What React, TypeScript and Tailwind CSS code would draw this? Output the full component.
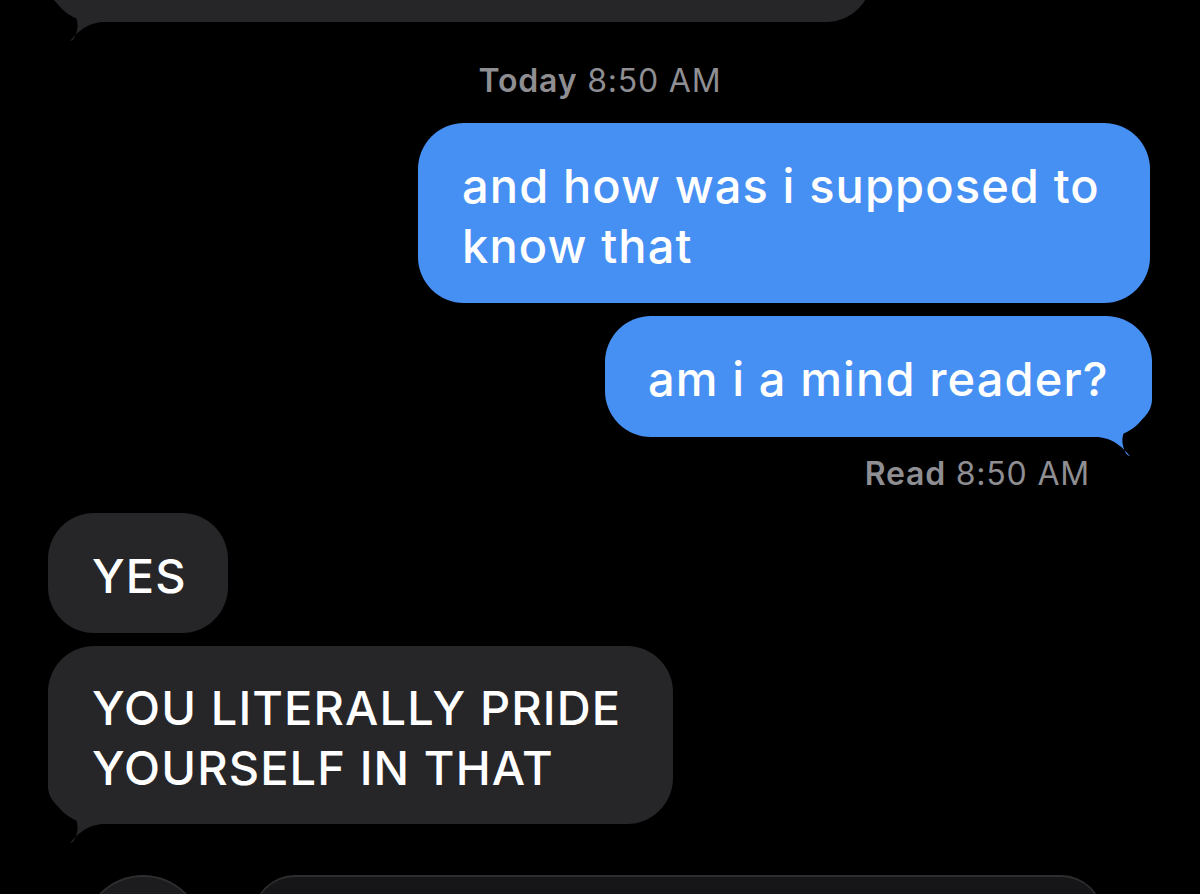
import React from "react";

const FONT = { fontFamily: "Inter, 'Noto Sans', 'Liberation Sans', sans-serif" };

// iMessage-style tail, drawn for the bottom-right corner; mirrored for incoming bubbles
function Tail({ color, side }: { color: string; side: "left" | "right" }) {
  return (
    <svg
      width="62"
      height="70"
      viewBox="-60 -50 62 70"
      className={
        side === "right"
          ? "absolute right-[-2px] bottom-[-20px]"
          : "absolute left-[-2px] bottom-[-20px] -scale-x-100"
      }
    >
      <path
        fill={color}
        d="M0 -50 L0 -38 C0 -23 -13 -14 -23 -10 C-30 -6 -31 4 -28 12 C-27 15 -25 19 -22 19 C-27 14 -35 2 -54 0 L-60 0 L-60 -50 Z"
      />
    </svg>
  );
}

export default function App() {
  return (
    <div className="w-[1200px] h-[894px] bg-black overflow-hidden flex flex-col text-white" style={FONT}>
      {/* previous message, cut off at the top */}
      <div className="relative ml-[48px] -mt-[78px] w-[824px] h-[100px] shrink-0 rounded-[46px] bg-[#262629]">
        <Tail color="#262629" side="left" />
      </div>

      <div className="mt-[39px] h-[40px] text-center text-[32px] leading-[40px] tracking-[0.8px] text-[#8e8e93]">
        <span className="font-semibold">Today</span> 8:50 AM
      </div>

      {/* outgoing */}
      <div className="mt-[22px] self-end mr-[50px] w-[732px] rounded-[46px] bg-[#4790f3] px-[44px] pt-[33px] pb-[27px] text-[47px] font-medium leading-[60px] tracking-[1.1px]">
        <span className="block whitespace-nowrap">and how was i supposed to</span>
        <span className="block whitespace-nowrap">know that</span>
      </div>
      <div className="relative mt-[13px] self-end mr-[48px] w-[547px] rounded-[46px] bg-[#4790f3] px-[43px] pt-[33px] pb-[28px] text-[47px] font-medium leading-[60px] tracking-[1.1px] whitespace-nowrap">
        <Tail color="#4790f3" side="right" />
        <span className="relative">am i a mind reader?</span>
      </div>

      <div className="mt-[17px] self-end mr-[110px] h-[40px] text-[32px] leading-[40px] tracking-[0.8px] text-[#8e8e93]">
        <span className="font-semibold">Read</span> 8:50 AM
      </div>

      {/* incoming */}
      <div className="mt-[19px] ml-[48px] w-[180px] rounded-[46px] bg-[#262629] px-[44px] pt-[33px] pb-[27px] text-[47px] font-medium leading-[60px] tracking-[1.1px]">
        YES
      </div>
      <div className="relative mt-[13px] ml-[48px] w-[625px] rounded-[46px] bg-[#262629] px-[44px] pt-[32px] pb-[26px] text-[47px] font-medium leading-[60px] tracking-[1.1px]">
        <Tail color="#262629" side="left" />
        <span className="relative block whitespace-nowrap">YOU LITERALLY PRIDE</span>
        <span className="relative block whitespace-nowrap">YOURSELF IN THAT</span>
      </div>

      {/* input bar, cut off at the bottom */}
      <div className="mt-[51px] ml-[83px] flex gap-[50px] shrink-0">
        <div className="w-[120px] h-[120px] rounded-full bg-[#1c1c1e] border-t-2 border-x border-[#2e2e30]" />
        <div className="w-[850px] h-[100px] rounded-[42px] bg-[#161618] border-t-2 border-x border-[#2e2e30]" />
      </div>
    </div>
  );
}
